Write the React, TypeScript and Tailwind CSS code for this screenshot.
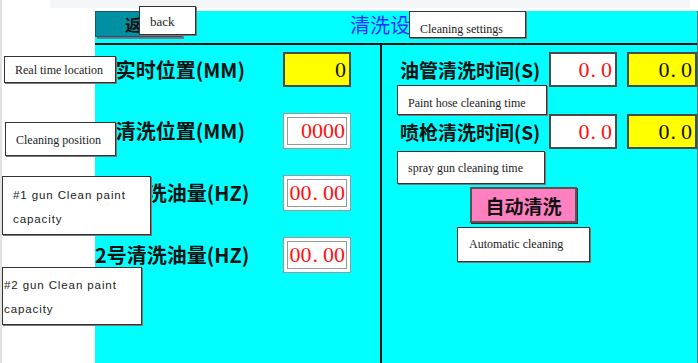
import React from "react";

const cjk = { fontFamily: '"Noto Sans CJK SC", "Noto Sans", sans-serif' };
const serif = { fontFamily: '"Liberation Serif", "Noto Sans CJK SC", serif' };
const sans = { fontFamily: '"Liberation Sans", "DejaVu Sans", sans-serif' };

// annotation note that sits over the HMI screen
function Note({
  className,
  children,
  font = serif,
}: {
  className: string;
  children: React.ReactNode;
  font?: React.CSSProperties;
}) {
  return (
    <div
      style={font}
      className={`absolute bg-white border border-[#333] shadow-[1px_1px_0_#777] text-[#222] ${className}`}
    >
      {children}
    </div>
  );
}

// numbers on the panel are drawn with a wide decimal point
function Num({ value }: { value: string }) {
  const [a, b] = value.split(".");
  if (b === undefined) return <>{a}</>;
  return (
    <>
      {a}
      <span className="pl-[1px] pr-[5px]">.</span>
      {b}
    </>
  );
}

function ValueBox({
  value,
  tone,
  className = "",
}: {
  value: string;
  tone: "yellow" | "white" | "inset";
  className?: string;
}) {
  if (tone === "inset") {
    return (
      <div className={`h-[36px] bg-white border border-[#999] p-[3px] ${className}`}>
        <div
          style={serif}
          className="h-full border border-[#999] flex items-center justify-end pr-[1px] text-[22px] text-[#ff1010] leading-none whitespace-nowrap"
        >
          <Num value={value} />
        </div>
      </div>
    );
  }
  return (
    <div
      style={serif}
      className={`h-[35px] border-2 border-[#4a4a4a] flex items-center justify-end pr-[3px] text-[22px] leading-none whitespace-nowrap ${
        tone === "yellow" ? "bg-[#ffff00] text-[#111]" : "bg-white text-[#ff1010]"
      } ${className}`}
    >
      <Num value={value} />
    </div>
  );
}

export default function App() {
  const leftRows = [
    { label: "实时位置(MM)", value: "0", tone: "yellow" as const },
    { label: "清洗位置(MM)", value: "0000", tone: "inset" as const },
    { label: "1号清洗油量(HZ)", value: "00.00", tone: "inset" as const },
    { label: "2号清洗油量(HZ)", value: "00.00", tone: "inset" as const },
  ];
  const rightRows = [
    { label: "油管清洗时间(S)" },
    { label: "喷枪清洗时间(S)" },
  ];

  return (
    <div className="relative w-[698px] h-[363px] bg-white overflow-hidden">
      {/* window chrome */}
      <div className="absolute left-0 top-0 w-[2px] h-full bg-[#e2e2e2]" />
      <div className="ml-[50px] mr-[8px] h-[8px] bg-[#f4f5f7]" />

      {/* HMI screen */}
      <div className="ml-[95px] mt-[3px] w-[603px] h-[352px] bg-[#00ffff] border-r border-[#2a7a7a] flex flex-col">
        {/* header */}
        <div className="h-[34px] shrink-0 border-b-2 border-[#111] flex items-start">
          <div className="w-[87px] h-[26px] bg-[#0090a4] border border-[#1d4f8f] shadow-[2px_2px_0_#777] flex items-center pl-[29px]">
            <span style={cjk} className="text-[16px] font-bold text-[#111] leading-none">
              返回
            </span>
          </div>
          <div style={cjk} className="ml-[168px] mt-[-1px] text-[20px] text-[#1030ff] leading-[30px]">
            清洗设置
          </div>
        </div>

        {/* body */}
        <div className="flex-1 flex">
          {/* left column */}
          <div className="w-[287px] shrink-0 border-r-2 border-[#111] pt-[7px] flex flex-col gap-[26px]">
            {leftRows.map((r) => (
              <div key={r.label} className="grid grid-cols-[150px_68px] gap-x-[38px] items-center">
                <div
                  style={cjk}
                  className="text-right whitespace-nowrap text-[20px] font-bold text-[#111] leading-none"
                >
                  {r.label}
                </div>
                <ValueBox value={r.value} tone={r.tone} />
              </div>
            ))}
          </div>

          {/* right column */}
          <div className="flex-1 pt-[7px] pl-[18px]">
            <div className="flex flex-col gap-[27px]">
              {rightRows.map((r) => (
                <div key={r.label} className="grid grid-cols-[139px_68px_70px] gap-x-[10px] items-center">
                  <div
                    style={cjk}
                    className="whitespace-nowrap text-[19px] font-bold text-[#111] leading-none"
                  >
                    {r.label}
                  </div>
                  <ValueBox value="0.0" tone="white" />
                  <ValueBox value="0.0" tone="yellow" />
                </div>
              ))}
            </div>
            <button
              style={cjk}
              className="mt-[38px] ml-[70px] w-[107px] h-[36px] bg-[#ff80c0] border-2 border-[#555] shadow-[1px_1px_0_#333] text-[19px] font-bold text-[#111] leading-none"
            >
              自动清洗
            </button>
          </div>
        </div>
      </div>

      {/* translation notes */}
      <Note className="left-[139px] top-[6px] w-[57px] h-[29px] pl-[10px] text-[13px] leading-[29px]">
        back
      </Note>
      <Note className="left-[409px] top-[11px] w-[117px] h-[27px] pl-[10px] pt-[9px] text-[12px] leading-[16px] overflow-hidden">
        Cleaning settings
      </Note>
      <Note className="left-[4px] top-[56px] w-[112px] h-[27px] pl-[10px] text-[12px] leading-[27px]">
        Real time location
      </Note>
      <Note className="left-[5px] top-[122px] w-[111px] h-[34px] pl-[10px] text-[12px] leading-[34px]">
        Cleaning position
      </Note>
      <Note
        font={sans}
        className="left-[2px] top-[176px] w-[149px] h-[59px] pl-[10px] pt-[6px] text-[11.5px] tracking-[0.9px] leading-[24px]"
      >
        #1 gun Clean paint
        <br />
        capacity
      </Note>
      <Note
        font={sans}
        className="left-[2px] top-[267px] w-[140px] h-[58px] pl-[1px] pt-[5px] text-[11.5px] tracking-[0.9px] leading-[24px]"
      >
        #2 gun Clean paint
        <br />
        capacity
      </Note>
      <Note className="left-[397px] top-[85px] w-[150px] h-[30px] pl-[10px] pt-[2px] text-[12px] leading-[30px]">
        Paint hose cleaning time
      </Note>
      <Note className="left-[397px] top-[151px] w-[148px] h-[33px] pl-[10px] pt-[1px] text-[12px] leading-[31px]">
        spray gun cleaning time
      </Note>
      <Note className="left-[457px] top-[227px] w-[133px] h-[35px] pl-[11px] text-[12px] leading-[33px]">
        Automatic cleaning
      </Note>
    </div>
  );
}
